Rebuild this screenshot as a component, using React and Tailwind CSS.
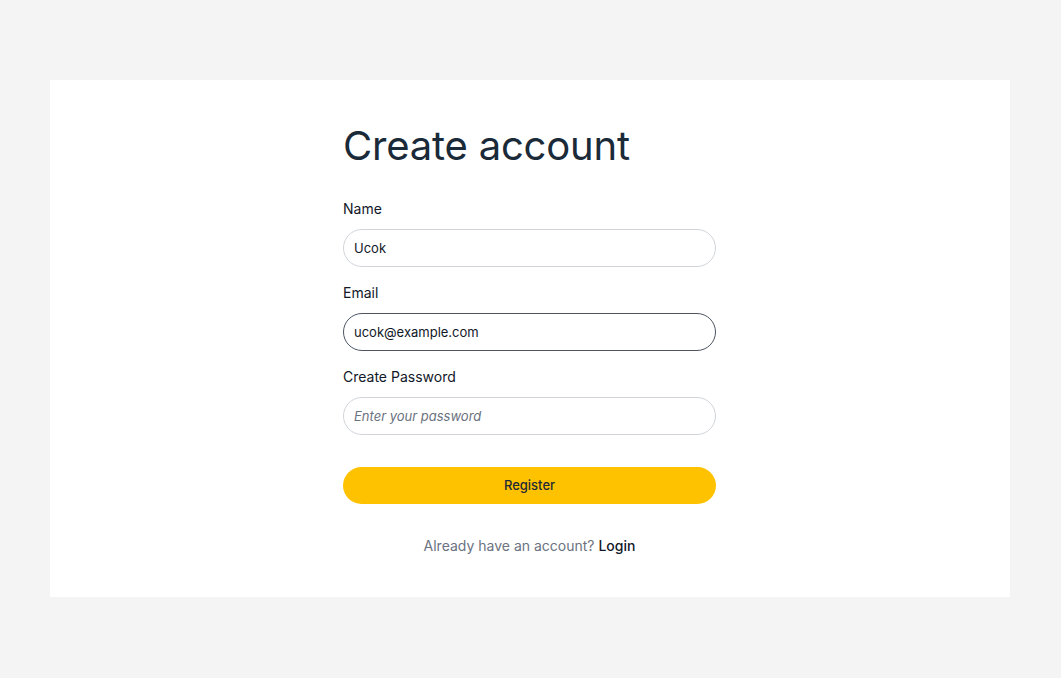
import React, { useState } from "react";

const Field = ({ label, type = "text", value, onChange, placeholder, focused }) => {
  return (
    <div className="flex flex-col">
      <label className="text-[14px] leading-5 text-[#111827] mb-2.5">{label}</label>
      <input
        type={type}
        value={value}
        onChange={onChange}
        placeholder={placeholder}
        className={`h-[38px] w-full rounded-full border bg-white px-[10px] text-[13px] text-[#111827] outline-none placeholder:italic placeholder:text-[#6b7280] ${
          focused ? "border-[#4b5563]" : "border-[#d1d5db]"
        }`}
      />
    </div>
  );
};

const App = () => {
  const [name, setName] = useState("Ucok");
  const [email, setEmail] = useState("ucok@example.com");
  const [password, setPassword] = useState("");

  return (
    <div
      className="min-h-screen w-full bg-[#f4f4f4] pt-[80px] pl-[50px]"
      style={{ fontFamily: "Inter, 'Noto Sans', sans-serif" }}
    >
      <div className="w-[960px] bg-white pt-[42px] pb-[41px] pl-[293px]">
        <form className="w-[373px] flex flex-col" onSubmit={(e) => e.preventDefault()}>
          <h1 className="text-[40px] leading-[48px] font-normal text-[#1b2a38] tracking-[-0.2px] mb-[29px]">
            Create account
          </h1>
          <div className="flex flex-col gap-4">
            <Field label="Name" value={name} onChange={(e) => setName(e.target.value)} />
            <Field
              label="Email"
              type="email"
              value={email}
              onChange={(e) => setEmail(e.target.value)}
              focused
            />
            <Field
              label="Create Password"
              type="password"
              value={password}
              onChange={(e) => setPassword(e.target.value)}
              placeholder="Enter your password"
            />
          </div>
          <button
            type="submit"
            className="mt-8 h-[37px] w-full rounded-full bg-[#ffc200] text-[13px] font-medium text-[#1f2937]"
          >
            Register
          </button>
          <p className="mt-8 text-center text-[14px] leading-5 text-[#6b7280]">
            Already have an account?{" "}
            <a href="#" className="font-medium text-[#111827]">
              Login
            </a>
          </p>
        </form>
      </div>
    </div>
  );
};

export default App;
